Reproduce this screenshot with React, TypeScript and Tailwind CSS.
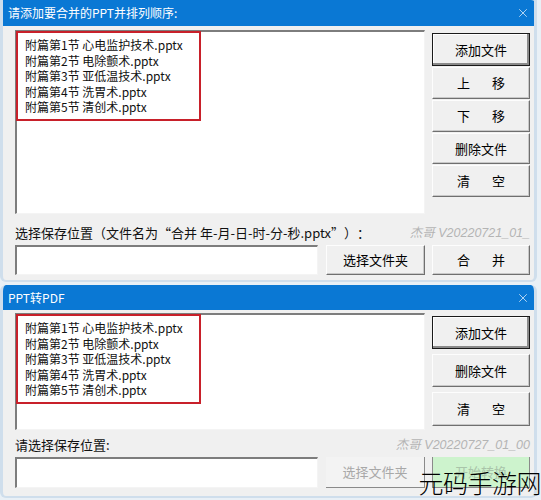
import React from "react";
import { X } from "lucide-react";

const mergeFiles = [
  "附篇第1节 心电监护技术.pptx",
  "附篇第2节 电除颤术.pptx",
  "附篇第3节 亚低温技术.pptx",
  "附篇第4节 洗胃术.pptx",
  "附篇第5节 清创术.pptx",
];

const btnBase =
  "flex items-center justify-center text-[13px] text-black bg-[#f0f0f0] border border-t-[#fdfdfd] border-l-[#fdfdfd] border-r-[#6f6f6f] border-b-[#6f6f6f] shadow-[inset_-1px_-1px_0_#c8c8c8]";

const Btn = ({
  children,
  className = "",
  primary = false,
}: {
  children: React.ReactNode;
  className?: string;
  primary?: boolean;
}) => (
  <div
    className={`${btnBase} ${
      primary ? "outline outline-1 outline-[#1a1a1a] -outline-offset-1 shadow-[inset_-2px_-2px_0_#8a8a8a,inset_1px_1px_0_#ffffff]" : ""
    } ${className}`}
  >
    {children}
  </div>
);

const Spaced = ({ a, b }: { a: string; b: string }) => (
  <span className="flex gap-[22px]">
    <span>{a}</span>
    <span>{b}</span>
  </span>
);

const TitleBar = ({ title, className = "" }: { title: string; className?: string }) => (
  <div
    className={`flex items-center justify-between bg-[#0a78d4] pl-[8px] pr-[7px] text-white text-[12px] rounded-tr-[6px] ${className}`}
  >
    <span>{title}</span>
    <X size={14} strokeWidth={1.4} className="text-[#d6e8f8]" />
  </div>
);

const FileList = ({ className = "" }: { className?: string }) => (
  <div
    className={`relative bg-white border-t-2 border-l-2 border-t-[#7d7d7d] border-l-[#7d7d7d] border-r border-b border-r-[#f4f4f4] border-b-[#f4f4f4] ${className}`}
  >
    <div className="absolute left-[-1px] top-[-1px] w-[185px] h-[90px] border-2 border-[#c8202a]" />
    <div className="pl-[8px] pt-[5px] flex flex-col text-[12px] leading-[15.5px] text-[#111]">
      {mergeFiles.map((f) => (
        <span key={f}>{f}</span>
      ))}
    </div>
  </div>
);

const Field = ({ className = "" }: { className?: string }) => (
  <div
    className={`bg-white border-t-2 border-l-2 border-t-[#7d7d7d] border-l-[#7d7d7d] border-r border-b border-r-[#f4f4f4] border-b-[#f4f4f4] ${className}`}
  />
);

export default function App() {
  return (
    <div className="w-[541px] h-[500px] overflow-hidden bg-[#e9f0f6] font-['Microsoft_YaHei','Noto_Sans_CJK_SC',sans-serif] relative">
      {/* Merge window */}
      <div className="w-[537px] h-[282px] flex flex-col border-l-[3px] border-r-[3px] border-b-[2px] border-[#cfdeec] rounded-b-[6px] overflow-hidden bg-[#f0f0f0]">
        <TitleBar title="请添加要合并的PPT并排列顺序:" className="h-[26px] -mx-[3px]" />
        <div className="flex flex-col pl-[12px] pr-[4px]">
          <div className="flex gap-[7px] mt-[4px]">
            <FileList className="w-[410px] h-[184px]" />
            <div className="flex flex-col w-[98px] mt-[3px] gap-[1px]">
              <Btn primary className="h-[33px]">添加文件</Btn>
              <Btn className="h-[32px]"><Spaced a="上" b="移" /></Btn>
              <Btn className="h-[32px]"><Spaced a="下" b="移" /></Btn>
              <Btn className="h-[31px]">删除文件</Btn>
              <Btn className="h-[32px]"><Spaced a="清" b="空" /></Btn>
            </div>
          </div>
          <div className="flex items-center justify-between mt-[11px] h-[16px] text-[13px]">
            <span className="text-[#111] [text-spacing-trim:space-all]">
              选择保存位置（文件名为“合并 年-月-日-时-分-秒.pptx”）：
            </span>
            <span className="italic text-[#b4b4b4] text-[12.5px] font-['Liberation_Sans','Noto_Sans_CJK_SC',sans-serif] whitespace-nowrap">
              杰哥 V20220721_01_
            </span>
          </div>
          <div className="flex mt-[4px] h-[30px]">
            <Field className="w-[303px]" />
            <Btn className="w-[99px] ml-[8px]">选择文件夹</Btn>
            <Btn className="w-[98px] ml-[7px]"><Spaced a="合" b="并" /></Btn>
          </div>
        </div>
      </div>

      {/* PPT to PDF window */}
      <div className="w-[537px] h-[213px] mt-[3px] flex flex-col border-l-[3px] border-r-[3px] border-b-[2px] border-[#cfdeec] rounded-[6px] overflow-hidden bg-[#f0f0f0]">
        <TitleBar title="PPT转PDF" className="h-[25px] -mx-[3px]" />
        <div className="flex flex-col pl-[12px] pr-[4px]">
          <div className="flex gap-[7px] mt-[3px]">
            <FileList className="w-[410px] h-[117px]" />
            <div className="flex flex-col w-[98px] mt-[3px] gap-[5px]">
              <Btn primary className="h-[33px]">添加文件</Btn>
              <Btn className="h-[33px]">删除文件</Btn>
              <Btn className="h-[34px]"><Spaced a="清" b="空" /></Btn>
            </div>
          </div>
          <div className="flex items-center justify-between mt-[7px] h-[16px] text-[13px]">
            <span className="text-[#111]">请选择保存位置:</span>
            <span className="italic text-[#b4b4b4] text-[12.5px] font-['Liberation_Sans','Noto_Sans_CJK_SC',sans-serif] whitespace-nowrap">
              杰哥 V20220727_01_00
            </span>
          </div>
          <div className="flex mt-[4px] h-[31px]">
            <Field className="w-[303px]" />
            <div className="w-[99px] ml-[8px] flex items-center justify-center text-[13px] text-[#a8a8a8] bg-[#f3f3f3] border-b border-r border-b-[#8a8a8a] border-r-[#8a8a8a]">
              选择文件夹
            </div>
            <div className="w-[98px] ml-[7px] flex items-center justify-center text-[13px] text-[#a9c4a9] bg-[#cdf3cd] border-b border-r border-l border-b-[#8a8a8a] border-r-[#8a8a8a] border-l-[#8a8a8a]">
              开始转换
            </div>
          </div>
        </div>
      </div>

      {/* site watermark */}
      <div className="absolute right-[0px] bottom-[4px] text-[25px] leading-[28px] font-light text-black tracking-[-0.5px]">
        元码手游网
      </div>
    </div>
  );
}
